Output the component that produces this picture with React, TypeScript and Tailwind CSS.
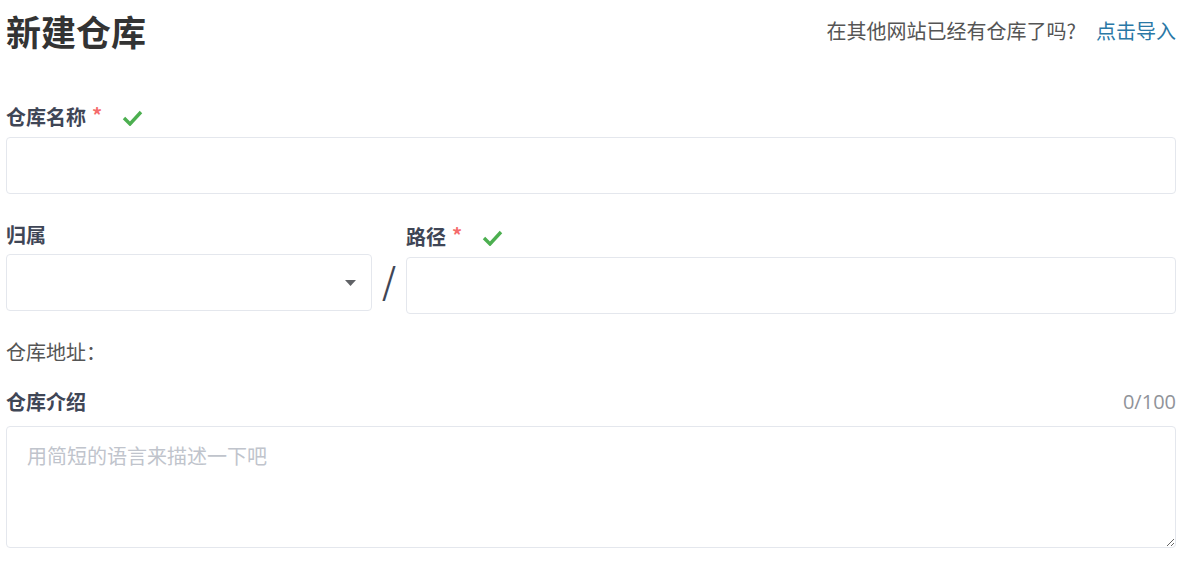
const font = { fontFamily: '"Noto Sans CJK SC", "Noto Sans", sans-serif' }

function Check() {
  return (
    <svg width="21" height="17" viewBox="0 0 21 17" className="ml-[20px]">
      <path d="M2 9 L8 15 L19 3" fill="none" stroke="#4caf50" strokeWidth="3.4" />
    </svg>
  )
}

function Label({ text, required }: { text: string; required?: boolean }) {
  return (
    <div className="flex items-center h-[28px] text-[20px] leading-[28px] font-bold text-[#3f4656]">
      <span>{text}</span>
      {required && (
        <>
          <span className="ml-[6px] text-[#f56c6c] text-[20px] leading-[20px] -mt-[4px] font-bold">*</span>
          <Check />
        </>
      )}
    </div>
  )
}

export default function App() {
  return (
    <div className="w-[1188px] h-[581px] bg-white pl-[6px] pr-[12px]" style={font}>
      <div className="flex items-center justify-between h-[62px]">
        <h1 className="text-[35px] font-bold text-[#333] leading-[44px]">新建仓库</h1>
        <div className="text-[20px] text-[#555] flex items-center">
          <span>在其他网站已经有仓库了吗?</span>
          <a className="ml-[20px] text-[#2a78a6]" href="#">点击导入</a>
        </div>
      </div>

      <div className="mt-[41px]">
        <Label text="仓库名称" required />
        <input className="mt-[6px] w-full h-[57px] border border-[#e4e7ed] rounded-[4px] px-4 outline-none" />
      </div>

      <div className="flex items-start">
        <div className="w-[366px]">
          <div className="mt-[27px]">
            <Label text="归属" />
          </div>
          <div className="mt-[5px] h-[57px] border border-[#e4e7ed] rounded-[4px] flex items-center justify-end pr-[15px]">
            <svg width="11" height="6" viewBox="0 0 11 6">
              <path d="M0 0 L11 0 L5.5 6 Z" fill="#606266" />
            </svg>
          </div>
        </div>
        <div className="w-[34px] flex justify-center mt-[60px] text-[36px] leading-[50px] text-[#3f4656]">/</div>
        <div className="flex-1">
          <div className="mt-[29px]">
            <Label text="路径" required />
          </div>
          <input className="mt-[6px] w-full h-[57px] border border-[#e4e7ed] rounded-[4px] px-4 outline-none" />
        </div>
      </div>

      <div className="mt-[24px] h-[28px] leading-[28px] text-[20px] text-[#555]">仓库地址：</div>

      <div className="mt-[21px] flex items-center justify-between">
        <Label text="仓库介绍" />
        <span className="text-[20px] text-[#909399]" style={{ fontFamily: '"Open Sans", "Noto Sans", sans-serif' }}>0/100</span>
      </div>
      <textarea
        className="block mt-[9px] w-full h-[122px] border border-[#e4e7ed] rounded-[4px] px-[20px] pt-[14px] text-[20px] outline-none resize-y placeholder:text-[#c0c4cc]"
        placeholder="用简短的语言来描述一下吧"
      />
    </div>
  )
}
